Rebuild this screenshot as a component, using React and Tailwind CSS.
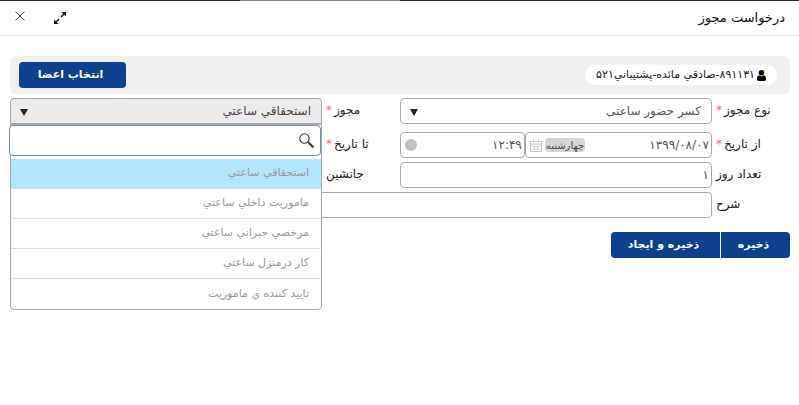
import React from "react";

const box = "h-[26px] rounded border border-[#a9a9a9] bg-white text-[#555]";

const options = [
  "استحقاقي ساعتي",
  "ماموريت داخلي ساعتي",
  "مرخصي جبراني ساعتي",
  "کار درمنزل ساعتي",
  "تاييد کننده ي ماموريت",
];

function Label({ htmlFor, required, children }) {
  return (
    <label htmlFor={htmlFor} className="flex h-6 items-center justify-end gap-[2px] pl-1 text-[12px] whitespace-nowrap text-[#222]">
      {children}
      {required && <span className="text-[12px] text-[#d9777b]">*</span>}
    </label>
  );
}

function Caret() {
  return (
    <svg viewBox="0 0 8 7" className="mt-[2px] h-[7px] w-2 fill-[#222]" aria-hidden="true">
      <path d="M0 0h8L4 7z" />
    </svg>
  );
}

function CloseIcon() {
  return (
    <svg viewBox="0 0 10 10" className="size-[10px]" fill="none" stroke="#444" strokeWidth="1">
      <path d="M.5.5l9 9M9.500.5l-9 9" />
    </svg>
  );
}

function ExpandIcon() {
  return (
    <svg viewBox="0 0 12 12" className="size-3" fill="none" stroke="#111" strokeWidth="1.400">
      <path d="M7 5l4-4M5 7l-4 4" />
      <path d="M7.500 0H12v4.500zM4.500 12H0V7.500z" fill="#111" stroke="none" />
    </svg>
  );
}

function PersonIcon() {
  return (
    <svg viewBox="0 0 9 11" className="h-[11px] w-[9px] shrink-0 fill-black" aria-hidden="true">
      <circle cx="4.500" cy="2.800" r="2.800" />
      <path d="M2 5.200c1.500 1.300 3.500 1.300 5 0C8.500 5.700 9 7 9 9c0 1.300-.6 2-1.700 2H1.700C.6 11 0 10.300 0 9c0-2 .5-3.300 2-3.800z" />
    </svg>
  );
}

function CalendarIcon() {
  return (
    <svg viewBox="0 0 12 13" className="h-[13px] w-3 shrink-0" fill="none" stroke="#c4c4c4" aria-hidden="true">
      <path d="M.5 2.500h11v10H.5zM.5 5h11M3.500 0v3.500M8.500 0v3.500" />
      <path d="M2 7.500h8M2 10h8M4.500 5.500v6M7.500 5.500v6" strokeWidth=".7" />
    </svg>
  );
}

function ClockIcon() {
  return (
    <svg viewBox="0 0 12 12" className="size-3 shrink-0" aria-hidden="true">
      <circle cx="6" cy="6" r="6" fill="#bfbfbf" />
      <path d="M3.500 5l2.500 1.500L8.500 5" fill="none" stroke="#d4d4d4" />
    </svg>
  );
}

function SearchIcon() {
  return (
    <svg viewBox="0 0 15 15" className="size-[15px] shrink-0" fill="none" stroke="#333" aria-hidden="true">
      <circle cx="5.500" cy="5.500" r="4.700" strokeWidth="1.100" />
      <path d="M9 9l1.500 1.500" strokeWidth="1.200" />
      <path d="M10.300 10.300l3.500 3.500" strokeWidth="2" strokeLinecap="round" />
    </svg>
  );
}

function DateTime({ id, date, day, time }) {
  return (
    <div className="flex min-w-0">
      <div className={`flex w-3/5 items-center gap-[3px] pr-[2px] pl-1 ${box}`}>
        <input id={id} defaultValue={date} className="min-w-0 flex-1 bg-transparent text-[12px] outline-none" />
        {day && <span className="flex h-[14px] items-center rounded bg-[#d5d5d5] px-px text-[10px] whitespace-nowrap text-[#444]">{day}</span>}
        <CalendarIcon />
      </div>
      <div className={`flex w-2/5 items-center pr-[2px] pl-1 ${box}`}>
        <input aria-label="ساعت" defaultValue={time} className="min-w-0 flex-1 bg-transparent text-[12px] outline-none" />
        <ClockIcon />
      </div>
    </div>
  );
}

function PermitPicker() {
  return (
    <div className="relative self-start">
      <button id="permit" type="button" role="combobox" aria-expanded="true" aria-controls="permit-list" className="flex h-[26px] w-full items-center justify-between rounded-t border border-[#a9a9a9] bg-[#ebebeb] pr-[10px] pl-[9px] text-[12px] text-[#444]">
        استحقاقي ساعتي
        <Caret />
      </button>
      <div className="absolute inset-x-0 top-full z-10 rounded-b border border-[#a9a9a9] bg-white">
        <div className="-ml-[2px] flex h-[31px] items-center gap-2 rounded border border-[#6f8faa] bg-white px-[6px]">
          <SearchIcon />
          <input aria-label="جستجو" className="min-w-0 flex-1 bg-transparent text-[12px] outline-none" />
        </div>
        <ul id="permit-list" role="listbox" className="mt-[3px] divide-y divide-[#ddd] text-[11px] text-[#999]">
          {options.map((option, i) => (
            <li key={option} role="option" aria-selected={i === 0} className="flex h-[30px] items-center px-3 aria-selected:bg-[#b3e5fc]">
              {option}
            </li>
          ))}
        </ul>
      </div>
    </div>
  );
}

export default function App() {
  return (
    <div dir="rtl" className="min-h-screen bg-white font-['DejaVu_Sans',sans-serif] text-[12px]">
      <div className="flex h-px bg-[#2b2e36]">
        <div className="w-1/2" />
        <div className="w-1/5 bg-[#858585]" />
      </div>
      <header className="flex h-[35px] items-center justify-between border-b border-[#e2e2e2] pr-[14px] pl-[15px]">
        <h1 className="text-[13px] text-[#111]">درخواست مجوز</h1>
        <div className="flex items-center gap-[29px] pb-1">
          <button type="button" aria-label="بزرگ‌نمایی" className="pt-1"><ExpandIcon /></button>
          <button type="button" aria-label="بستن"><CloseIcon /></button>
        </div>
      </header>
      <main className="pt-5 pr-[9px] pl-[10px]">
        <section className="flex h-[38px] items-center justify-between rounded-md bg-[#f0f0f0] pr-[13px] pl-[9px]">
          <span className="flex h-5 items-center gap-[2px] rounded-full bg-white px-[11px] text-[11px] text-[#222]">
            <PersonIcon />
            ۸۹۱۱۳۱-صادقي مائده-پشتيباني۵۲۱
          </span>
          <button type="button" className="h-[26px] w-[107px] rounded-sm bg-[#0f3f8f] pr-1 text-[11px] font-bold text-white">انتخاب اعضا</button>
        </section>
        <form className="mt-1">
          <div className="grid grid-cols-[78px_minmax(0,1fr)_78px_minmax(0,1fr)] gap-y-1">
            <Label htmlFor="kind" required>نوع مجوز</Label>
            <div className={`relative mb-1 flex items-center ${box}`}>
              <select id="kind" className="h-full w-full appearance-none bg-transparent px-[10px] text-[12px] outline-none">
                <option>کسر حضور ساعتی</option>
              </select>
              <span className="pointer-events-none absolute left-[9px]"><Caret /></span>
            </div>
            <Label htmlFor="permit" required>مجوز</Label>
            <PermitPicker />
            <Label htmlFor="from" required>از تاریخ</Label>
            <DateTime id="from" date="۱۳۹۹/۰۸/۰۷" day="چهارشنبه" time="۱۲:۴۹" />
            <Label htmlFor="to" required>تا تاریخ</Label>
            <DateTime id="to" />
            <Label htmlFor="days">تعداد روز</Label>
            <input id="days" defaultValue="۱" className={`w-full px-[2px] text-[12px] outline-none ${box}`} />
            <Label htmlFor="substitute">جانشین</Label>
            <input id="substitute" className={`w-full px-[2px] text-[12px] outline-none ${box}`} />
            <Label htmlFor="note">شرح</Label>
            <input id="note" className={`col-span-3 w-full px-[2px] text-[12px] outline-none ${box}`} />
          </div>
          <div className="mt-[14px] flex gap-px">
            <button type="button" className="h-[26px] w-[69px] rounded-r-sm bg-[#0f3f8f] pr-1 text-[11px] font-bold text-white">ذخیره</button>
            <button type="button" className="h-[26px] w-[109px] rounded-l-sm bg-[#0f3f8f] pr-1 text-[11px] font-bold text-white">ذخیره و ایجاد</button>
          </div>
        </form>
      </main>
    </div>
  );
}
